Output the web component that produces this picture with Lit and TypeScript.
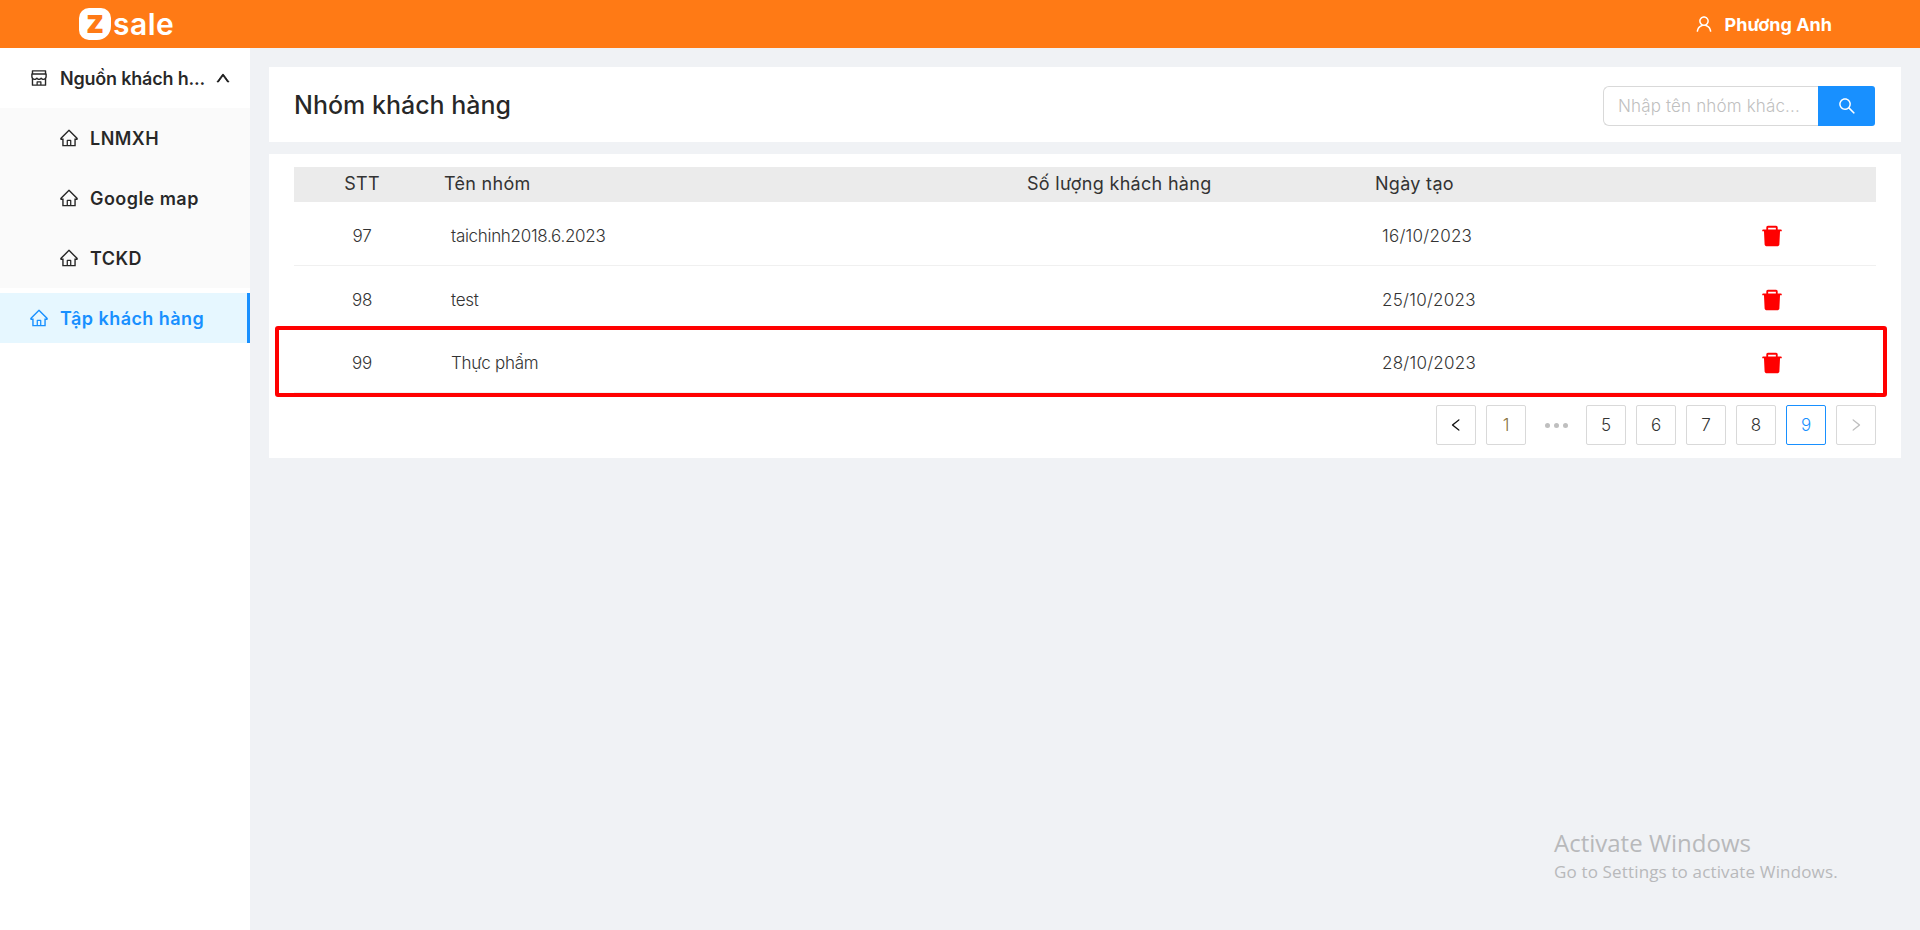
import {LitElement, html, css, svg} from 'lit';
import {customElement} from 'lit/decorators.js';

const HOME = 'M946.5 505L560.1 118.8l-25.9-25.9a31.5 31.5 0 0 0-44.4 0L77.5 505a63.9 63.9 0 0 0-18.8 46c.4 35.2 29.7 63.3 64.9 63.3h42.5V940h691.8V614.3h43.4c17.1 0 33.2-6.7 45.3-18.8a63.6 63.6 0 0 0 18.7-45.3c0-17-6.7-33.1-18.8-45.2zM568 868H456V664h112v204zm217.9-325.7V868H632V640c0-22.1-17.9-40-40-40H432c-22.1 0-40 17.9-40 40v228H238.1V542.3h-96l370-369.7 23.1 23.1L882 542.3h-96.1z';
const SHOP = 'M882 272.1V144c0-17.7-14.3-32-32-32H174c-17.7 0-32 14.3-32 32v128.1c-16.7 1-30 14.9-30 31.9v131.7a177 177 0 0 0 14.4 70.4c4.3 10.2 9.6 19.8 15.6 28.9v345c0 17.6 14.3 32 32 32h676c17.7 0 32-14.3 32-32V535a175 175 0 0 0 15.6-28.9c9.5-22.3 14.4-46 14.4-70.4V304c0-17-13.3-30.9-30-31.9zM214 184h596v88H214v-88zm362 656.1H448V736h128v104.1zm234 0H640V704c0-17.7-14.3-32-32-32H416c-17.7 0-32 14.3-32 32v136.1H214V597.9c2.9 1.4 5.9 2.8 9 4 22.3 9.4 46 14.1 70.4 14.1s48-4.7 70.4-14.1c13.8-5.8 26.8-13.2 38.7-22.1.2-.1.4-.1.6 0a180.4 180.4 0 0 0 38.7 22.1c22.3 9.4 46 14.1 70.4 14.1 24.4 0 48-4.7 70.4-14.1 13.8-5.8 26.8-13.2 38.7-22.1.2-.1.4-.1.6 0a180.4 180.4 0 0 0 38.7 22.1c22.3 9.4 46 14.1 70.4 14.1 24.4 0 48-4.7 70.4-14.1 3-1.3 6-2.6 9-4v242.2zm30-404.4c0 59.8-49 108.3-109.3 108.3-40.8 0-76.4-22.1-95.2-54.9-2.9-5-8.1-8.1-13.9-8.1h-.6c-5.7 0-11 3.1-13.9 8.1A109.24 109.24 0 0 1 512 544c-40.7 0-76.2-22-95-54.7-3-5.1-8.4-8.3-14.3-8.3s-11.4 3.2-14.3 8.3a109.63 109.63 0 0 1-95.1 54.7C233 544 184 495.5 184 435.7v-91.2c0-.3.2-.5.5-.5h655c.3 0 .5.2.5.5v91.2z';
const USER = 'M858.5 763.6a374 374 0 0 0-80.6-119.5 375.63 375.63 0 0 0-119.5-80.6c-.4-.2-.8-.3-1.2-.5C719.5 518 760 444.7 760 362c0-137-111-248-248-248S264 225 264 362c0 82.7 40.5 156 102.8 201.1-.4.2-.8.3-1.2.5-44.8 18.9-85 46-119.5 80.6a375.63 375.63 0 0 0-80.6 119.5A371.7 371.7 0 0 0 136 901.8a8 8 0 0 0 8 8.2h60c4.4 0 7.9-3.5 8-7.8 2-77.2 33-149.5 87.8-204.3 56.7-56.7 132-87.9 212.2-87.9s155.5 31.2 212.2 87.9C779 752.7 810 825 812 902.2c.1 4.4 3.6 7.8 8 7.8h60a8 8 0 0 0 8-8.2c-1-47.8-10.9-94.3-29.5-138.2zM512 534c-45.9 0-89.1-17.9-121.6-50.4S340 407.9 340 362c0-45.9 17.9-89.1 50.4-121.6S466.1 190 512 190s89.1 17.9 121.6 50.4S684 316.1 684 362c0 45.9-17.9 89.1-50.4 121.6S557.9 534 512 534z';
const SEARCH = 'M909.6 854.5L649.9 594.8C690.2 542.7 712 479 712 412c0-80.2-31.3-155.4-87.9-212.1-56.6-56.7-132-87.9-212.1-87.9s-155.5 31.3-212.1 87.9C143.2 256.5 112 331.8 112 412c0 80.1 31.3 155.5 87.9 212.1C256.5 680.8 331.8 712 412 712c67 0 130.6-21.8 182.7-62l259.7 259.6a8.2 8.2 0 0 0 11.6 0l43.6-43.5a8.2 8.2 0 0 0 0-11.6zM570.4 570.4C528 612.7 471.8 636 412 636s-116-23.3-158.4-65.6C211.3 528 188 471.8 188 412s23.3-116.1 65.6-158.4C296 211.3 352.2 188 412 188s116.1 23.2 158.4 65.6S636 352.2 636 412s-23.3 116.1-65.6 158.4z';
const TRASH = 'M864 256H736v-80c0-35.3-28.7-64-64-64H352c-35.3 0-64 28.7-64 64v80H160c-17.7 0-32 14.3-32 32v32c0 4.4 3.6 8 8 8h60.4l24.7 523c1.6 34.1 29.8 61 63.9 61h454c34.2 0 62.3-26.8 63.9-61l24.7-523H888c4.4 0 8-3.6 8-8v-32c0-17.7-14.3-32-32-32zm-200 0H360v-72h304v72z';
const LEFT = 'M724 218.3V141c0-6.7-7.7-10.4-12.9-6.3L260.3 486.8a31.86 31.86 0 0 0 0 50.3l450.8 352.1c5.3 4.1 12.9.4 12.9-6.3v-77.3c0-4.9-2.3-9.6-6.1-12.6l-360-281 360-281.1c3.8-3 6.1-7.7 6.1-12.6z';
const RIGHT = 'M765.7 486.8L314.9 134.7A7.97 7.97 0 0 0 302 141v77.3c0 4.9 2.3 9.6 6.1 12.6l360 281.1-360 281.1c-3.9 3-6.1 7.7-6.1 12.6V883c0 6.7 7.7 10.4 12.9 6.3l450.8-352.1a31.96 31.96 0 0 0 0-50.4z';
const UP = 'M890.5 755.3L537.9 269.2c-12.8-17.6-39-17.6-51.7 0L133.5 755.3A8 8 0 0 0 140 768h75c5.1 0 9.9-2.5 12.9-6.6L512 369.8l284.1 391.6c3 4.1 7.8 6.6 12.9 6.6h75c6.5 0 10.3-7.4 6.5-12.7z';

const icon = (d: string, size: number) => html`<svg
  width=${size}
  height=${size}
  viewBox="0 0 1024 1024"
  fill="currentColor"
>${svg`<path d=${d}></path>`}</svg>`;

const ROWS = [
  {stt: 97, name: 'taichinh2018.6.2023', date: '16/10/2023'},
  {stt: 98, name: 'test', date: '25/10/2023'},
  {stt: 99, name: 'Thực phẩm', date: '28/10/2023'},
];

@customElement('app-root')
export class AppRoot extends LitElement {
  static styles = css`
    :host {
      display: block;
      height: 930px;
      overflow: hidden;
      position: relative;
      background: #f0f2f5;
      font-family: Inter, 'Noto Sans', sans-serif;
      color: rgba(0, 0, 0, 0.85);
    }
    svg {
      display: block;
      flex: none;
    }
    .topbar {
      height: 48px;
      background: #ff7a15;
      display: flex;
      align-items: center;
      justify-content: space-between;
      color: #fff;
    }
    .logo {
      display: flex;
      align-items: center;
      margin-left: 79px;
    }
    .logo-mark {
      width: 32px;
      height: 32px;
      background: #fff;
      border-radius: 10px 10px 14px 10px;
      color: #ff7a15;
      font-size: 32px;
      font-weight: 800;
      line-height: 28px;
      text-align: center;
    }
    .logo-text {
      font-size: 30px;
      font-weight: 600;
      line-height: 32px;
      letter-spacing: 0.5px;
      margin-left: 2px;
    }
    .user {
      display: flex;
      align-items: center;
      gap: 11px;
      margin-right: 88px;
      font-size: 18px;
      font-weight: 700;
    }
    .body {
      display: flex;
      height: 882px;
    }
    .sidebar {
      width: 250px;
      flex: none;
      background: #fff;
      font-size: 18px;
      font-weight: 600;
      letter-spacing: 0.45px;
    }
    .menu-item {
      height: 60px;
      display: flex;
      align-items: center;
      gap: 11px;
      padding-left: 29px;
      white-space: nowrap;
      box-sizing: border-box;
    }
    .trimmed {
      width: 146px;
      letter-spacing: -0.2px;
    }
    .chevron {
      margin-left: -2px;
    }
    .chevron svg {
      stroke: currentColor;
      stroke-width: 50;
    }
    .submenu {
      background: #fafafa;
    }
    .submenu .menu-item {
      padding-left: 59px;
    }
    .active {
      height: 50px;
      margin-top: 5px;
      background: #e6f7ff;
      color: #1890ff;
      border-right: 3px solid #1890ff;
    }
    main {
      flex: 1;
      padding: 19px 19px 0;
      display: flex;
      flex-direction: column;
      gap: 12px;
    }
    .title-card {
      height: 75px;
      background: #fff;
      display: flex;
      align-items: center;
      justify-content: space-between;
      padding: 0 26px 0 25px;
    }
    h1 {
      margin: 0;
      font-size: 25px;
      font-weight: 500;
    }
    .search {
      display: flex;
      height: 40px;
      margin-top: 3px;
    }
    .search-input {
      width: 215px;
      box-sizing: border-box;
      border: 1px solid #d9d9d9;
      border-right: 0;
      border-radius: 6px 0 0 6px;
      padding: 0 12px 0 14px;
      font: 300 17px Inter, 'Noto Sans', sans-serif;
      letter-spacing: 0.15px;
      line-height: 38px;
      color: #bfbfbf;
      white-space: nowrap;
    }
    .search-btn {
      width: 57px;
      background: #1890ff;
      border-radius: 0 3px 3px 0;
      color: #fff;
      display: flex;
      align-items: center;
      justify-content: center;
    }
    .table-card {
      position: relative;
      background: #fff;
      padding: 13px 25px;
    }
    .row {
      display: grid;
      grid-template-columns: 136px 583px 348px 307px 208px;
      align-items: center;
    }
    .head {
      height: 35px;
      background: #ebebeb;
      font-size: 18px;
      font-weight: 400;
      letter-spacing: 0.3px;
      line-height: 33px;
      color: #333;
    }
    .head > div {
      height: 35px;
    }
    .head > div:not(:first-child) {
      padding-left: 14px;
    }
    .center {
      text-align: center;
    }
    .data {
      height: 63.5px;
      padding-top: 6px;
      box-sizing: border-box;
      border-bottom: 1px solid #f0f0f0;
      font-size: 17px;
      font-weight: 300;
      letter-spacing: -0.3px;
      color: #333;
    }
    .data > .cell {
      padding-left: 21px;
    }
    .data > .date {
      letter-spacing: 0.25px;
    }
    .del {
      color: #f00;
      display: flex;
      justify-content: center;
    }
    .highlight {
      position: absolute;
      left: 6px;
      top: 172px;
      width: 1612px;
      height: 71px;
      box-sizing: border-box;
      border: 4px solid #f00;
      border-radius: 3px;
    }
    .pager {
      display: flex;
      justify-content: flex-end;
      gap: 10px;
      margin-top: 12.5px;
    }
    .page {
      width: 40px;
      height: 40px;
      box-sizing: border-box;
      border: 1px solid #d9d9d9;
      border-radius: 2px;
      display: flex;
      align-items: center;
      justify-content: center;
      font-size: 17px;
      font-weight: 300;
      color: #333;
    }
    .page.first {
      color: #8a7340;
    }
    .page.current {
      border-color: #1890ff;
      color: #1890ff;
    }
    .page.disabled {
      color: #bfbfbf;
    }
    .prev {
      color: #111;
    }
    .dots {
      width: 40px;
      display: flex;
      align-items: center;
      justify-content: center;
      gap: 4px;
    }
    .dots i {
      width: 5px;
      height: 5px;
      border-radius: 50%;
      background: #bfbfbf;
    }
    .watermark {
      position: absolute;
      left: 1554px;
      top: 826px;
      font-family: 'Open Sans', sans-serif;
      color: #b8b9bb;
    }
    .watermark div:first-child {
      font-size: 24px;
      line-height: 33px;
    }
    .watermark div:last-child {
      font-size: 17px;
      letter-spacing: 0.15px;
      line-height: 25px;
    }
  `;

  render() {
    return html`
      <div class="topbar">
        <div class="logo">
          <div class="logo-mark">z</div>
          <div class="logo-text">sale</div>
        </div>
        <div class="user">${icon(USER, 20)}<span>Phương Anh</span></div>
      </div>
      <div class="body">
        <nav class="sidebar">
          <div class="menu-item">
            ${icon(SHOP, 20)}
            <span class="trimmed">Nguồn khách h...</span>
            <span class="chevron">${icon(UP, 16)}</span>
          </div>
          <div class="submenu">
            ${['LNMXH', 'Google map', 'TCKD'].map(
              (name) => html`<div class="menu-item">${icon(HOME, 20)}<span>${name}</span></div>`
            )}
          </div>
          <div class="menu-item active">${icon(HOME, 20)}<span>Tập khách hàng</span></div>
        </nav>
        <main>
          <div class="title-card">
            <h1>Nhóm khách hàng</h1>
            <div class="search">
              <div class="search-input">Nhập tên nhóm khác...</div>
              <div class="search-btn">${icon(SEARCH, 20)}</div>
            </div>
          </div>
          <div class="table-card">
            <div class="row head">
              <div class="center">STT</div>
              <div>Tên nhóm</div>
              <div>Số lượng khách hàng</div>
              <div>Ngày tạo</div>
              <div></div>
            </div>
            ${ROWS.map(
              (row) => html`
                <div class="row data">
                  <div class="center">${row.stt}</div>
                  <div class="cell">${row.name}</div>
                  <div class="cell"></div>
                  <div class="cell date">${row.date}</div>
                  <div class="del">${icon(TRASH, 26)}</div>
                </div>
              `
            )}
            <div class="pager">
              <div class="page prev">${icon(LEFT, 16)}</div>
              <div class="page first">1</div>
              <div class="dots"><i></i><i></i><i></i></div>
              ${[5, 6, 7, 8].map((n) => html`<div class="page">${n}</div>`)}
              <div class="page current">9</div>
              <div class="page disabled">${icon(RIGHT, 16)}</div>
            </div>
            <div class="highlight"></div>
          </div>
        </main>
      </div>
      <div class="watermark">
        <div>Activate Windows</div>
        <div>Go to Settings to activate Windows.</div>
      </div>
    `;
  }
}
